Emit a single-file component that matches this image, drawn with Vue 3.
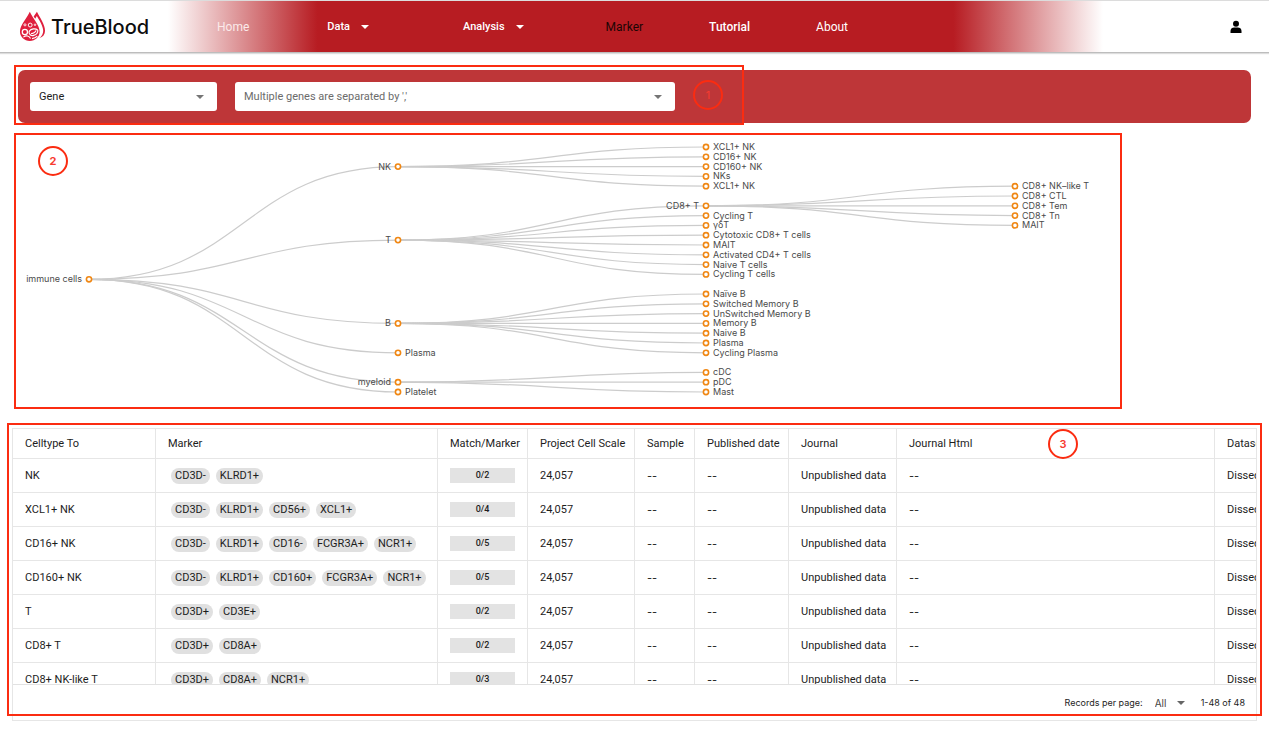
<script setup>
import { ref } from 'vue'

const searchType = ref('Gene')
const genes = ref('')
const pageSize = ref('All')

const ROW = 9.8
const COLS = [73, 382, 690, 999]
const TOP = 12

// [id, parent, depth, row, label]
const nodeData = [
  ['root', null, 0, 13.5, 'immune cells'],
  ['nk', 'root', 1, 2, 'NK'],
  ['t', 'root', 1, 9.5, 'T'],
  ['b', 'root', 1, 18, 'B'],
  ['plasma', 'root', 1, 21, 'Plasma'],
  ['myeloid', 'root', 1, 24, 'myeloid'],
  ['platelet', 'root', 1, 25, 'Platelet'],
  ['nk1', 'nk', 2, 0, 'XCL1+ NK'],
  ['nk2', 'nk', 2, 1, 'CD16+ NK'],
  ['nk3', 'nk', 2, 2, 'CD160+ NK'],
  ['nk4', 'nk', 2, 3, 'NKs'],
  ['nk5', 'nk', 2, 4, 'XCL1+ NK'],
  ['cd8', 't', 2, 6, 'CD8+ T'],
  ['t1', 't', 2, 7, 'Cycling T'],
  ['t2', 't', 2, 8, 'γδT'],
  ['t3', 't', 2, 9, 'Cytotoxic CD8+ T cells'],
  ['t4', 't', 2, 10, 'MAIT'],
  ['t5', 't', 2, 11, 'Activated CD4+ T cells'],
  ['t6', 't', 2, 12, 'Naive T cells'],
  ['t7', 't', 2, 13, 'Cycling T cells'],
  ['b1', 'b', 2, 15, 'Naïve B'],
  ['b2', 'b', 2, 16, 'Switched Memory B'],
  ['b3', 'b', 2, 17, 'UnSwitched Memory B'],
  ['b4', 'b', 2, 18, 'Memory B'],
  ['b5', 'b', 2, 19, 'Naive B'],
  ['b6', 'b', 2, 20, 'Plasma'],
  ['b7', 'b', 2, 21, 'Cycling Plasma'],
  ['m1', 'myeloid', 2, 23, 'cDC'],
  ['m2', 'myeloid', 2, 24, 'pDC'],
  ['m3', 'myeloid', 2, 25, 'Mast'],
  ['c1', 'cd8', 3, 4, 'CD8+ NK–like T'],
  ['c2', 'cd8', 3, 5, 'CD8+ CTL'],
  ['c3', 'cd8', 3, 6, 'CD8+ Tem'],
  ['c4', 'cd8', 3, 7, 'CD8+ Tn'],
  ['c5', 'cd8', 3, 8, 'MAIT'],
]
const nodes = nodeData.map(([id, parent, depth, row, label]) => ({
  id, parent, label,
  x: COLS[depth],
  y: TOP + row * ROW,
  branch: nodeData.some((n) => n[1] === id),
}))
const links = nodes.filter((n) => n.parent).map((n) => {
  const p = nodes.find((m) => m.id === n.parent)
  const mid = (p.x + n.x) / 2
  return { id: n.id, d: `M${p.x} ${p.y}C${mid} ${p.y} ${mid} ${n.y} ${n.x} ${n.y}` }
})

const columns = [
  { name: 'Celltype To', cls: 'c-type' },
  { name: 'Marker', cls: 'c-marker' },
  { name: 'Match/Marker', cls: 'c-match' },
  { name: 'Project Cell Scale', cls: 'c-scale' },
  { name: 'Sample', cls: 'c-sample' },
  { name: 'Published date', cls: 'c-date' },
  { name: 'Journal', cls: 'c-journal' },
  { name: 'Journal Html', cls: 'c-html' },
  { name: 'Dataset', cls: 'c-dataset' },
]
const rows = [
  { type: 'NK', markers: ['CD3D-', 'KLRD1+'] },
  { type: 'XCL1+ NK', markers: ['CD3D-', 'KLRD1+', 'CD56+', 'XCL1+'] },
  { type: 'CD16+ NK', markers: ['CD3D-', 'KLRD1+', 'CD16-', 'FCGR3A+', 'NCR1+'] },
  { type: 'CD160+ NK', markers: ['CD3D-', 'KLRD1+', 'CD160+', 'FCGR3A+', 'NCR1+'] },
  { type: 'T', markers: ['CD3D+', 'CD3E+'] },
  { type: 'CD8+ T', markers: ['CD3D+', 'CD8A+'] },
  { type: 'CD8+ NK-like T', markers: ['CD3D+', 'CD8A+', 'NCR1+'] },
]
</script>

<template>
  <div class="page">
    <header class="topbar">
      <a class="brand" href="#">
        <svg class="brand-icon" viewBox="0 0 28 32" aria-hidden="true">
          <path d="M11.200 0.800C8.500 7 1 14.500 1 21.300 1 27 5.500 31 11.200 31s10.200-4 10.200-9.700C21.400 14.500 13.900 7 11.200 0.800z" fill="#df1f3d" />
          <path d="M15.200 5.500 18.600 0.800C21.500 6.500 27 14 27 20.500c0 4-2.200 6.500-5.800 7.500 2.600-2 3.900-4.500 3.900-7.500 0-5-4-11-6.600-15.500L16.800 8z" fill="#df1f3d" />
          <g fill="none" stroke="#fff">
            <circle cx="6.200" cy="14.300" r="1.100" stroke-width="0.900" />
            <circle cx="11.600" cy="14.500" r="2" stroke-width="1" />
            <circle cx="16.600" cy="14.200" r="0.800" stroke-width="0.900" />
            <circle cx="6.100" cy="21.600" r="2.700" stroke-width="1.300" />
            <path d="M10.500 21c2-2.800 6.500-3.500 9-1.200M10.500 21c-.8 3 2 5 4.700 4.200 2.800-.8 4.500-3 4.300-5.400M12.500 23.200c1.600.3 4.800-1.300 5.200-3.200M4.500 27c3-2 6-1.500 7.500 1.500M13.500 28.500c2-.2 4-1 5.500-2.500" stroke-width="1.200" />
          </g>
        </svg>
        <span class="brand-name">TrueBlood</span>
      </a>
      <nav class="nav">
        <a class="nav-link soft" href="#">Home</a>
        <button class="nav-menu" type="button">Data <span class="caret"></span></button>
        <button class="nav-menu" type="button">Analysis <span class="caret"></span></button>
        <a class="nav-link active" href="#">Marker</a>
        <a class="nav-link strong" href="#">Tutorial</a>
        <a class="nav-link" href="#">About</a>
      </nav>
      <button class="account" type="button" aria-label="Account">
        <svg viewBox="0 0 12 14" aria-hidden="true">
          <circle cx="6" cy="3.800" r="3" />
          <path d="M0.500 12.900V11c0-2.300 1.800-3.400 3.600-3.400h3.800c1.800 0 3.600 1.100 3.600 3.400v1.900z" />
        </svg>
      </button>
    </header>

    <main>
      <form class="search" @submit.prevent>
        <div class="field type-field">
          <select v-model="searchType" aria-label="Search type">
            <option>Gene</option>
            <option>Cell type</option>
          </select>
          <span class="caret"></span>
        </div>
        <div class="field gene-field">
          <input v-model="genes" type="text" aria-label="Genes" placeholder="Multiple genes are separated by ','">
          <span class="caret"></span>
        </div>
        <span class="badge badge-search">1</span>
        <div class="search-frame"></div>
      </form>

      <section class="tree">
        <svg viewBox="0 0 1104 272" role="img" aria-label="Immune cell hierarchy">
          <path v-for="l in links" :key="l.id" class="link" :d="l.d" />
          <g v-for="n in nodes" :key="n.id">
            <circle class="node" :cx="n.x" :cy="n.y" r="2.600" />
            <text
              class="label"
              :x="n.branch ? n.x - 7 : n.x + 7"
              :y="n.y + 3"
              :text-anchor="n.branch ? 'end' : 'start'"
            >{{ n.label }}</text>
          </g>
        </svg>
        <span class="badge badge-tree">2</span>
      </section>

      <section class="results">
        <div class="scroller">
          <table>
            <colgroup>
              <col v-for="c in columns" :key="c.name" :class="c.cls">
            </colgroup>
            <thead>
              <tr><th v-for="c in columns" :key="c.name" scope="col">{{ c.name }}</th></tr>
            </thead>
            <tbody>
              <tr v-for="r in rows" :key="r.type">
                <td>{{ r.type }}</td>
                <td>
                  <div class="chips">
                    <span v-for="m in r.markers" :key="m" class="chip">{{ m }}</span>
                  </div>
                </td>
                <td><div class="match">0/{{ r.markers.length }}</div></td>
                <td>24,057</td>
                <td class="empty">--</td>
                <td class="empty">--</td>
                <td>Unpublished data</td>
                <td class="empty">--</td>
                <td>Dissection</td>
              </tr>
            </tbody>
          </table>
        </div>
        <footer class="pager">
          <label for="page-size">Records per page:</label>
          <div class="page-size">
            <select id="page-size" v-model="pageSize">
              <option>All</option>
              <option>20</option>
            </select>
            <span class="caret"></span>
          </div>
          <span>1-48 of 48</span>
        </footer>
        <span class="badge badge-results">3</span>
        <div class="results-frame"></div>
      </section>
    </main>
  </div>
</template>

<style>
body {
  margin: 0;
  background: #fff;
}
</style>

<style scoped>
.page {
  font-family: Roboto, "Liberation Sans", sans-serif;
  font-size: 11px;
  line-height: 16px;
  color: #1d1d1d;
}
.page * {
  box-sizing: border-box;
}
button,
select,
input {
  font: inherit;
  color: inherit;
  border: 0;
  padding: 0;
  background: none;
  appearance: none;
}
a {
  text-decoration: none;
}
.caret {
  flex: none;
  border: 4px solid transparent;
  border-top-color: currentColor;
  border-bottom: 0;
}

.topbar {
  display: flex;
  height: 53px;
  border-top: 1px solid #dcdcdc;
  border-bottom: 1px solid #bdbdbd;
  box-shadow: 0 1px 1px #ddd;
}
.brand {
  flex: none;
  display: flex;
  align-items: center;
  gap: 5px;
  width: 168px;
  padding-left: 19px;
  color: #0d0d0d;
}
.brand-icon {
  width: 27px;
  height: 31px;
}
.brand-name {
  font-family: Inter, "Liberation Sans", sans-serif;
  font-size: 20px;
  font-weight: 500;
  line-height: 24px;
}
.nav {
  flex: 1;
  display: flex;
  align-items: center;
  padding-left: 16px;
  color: #fff;
  background: linear-gradient(90deg, #fff, #b71c22 16%, #b71c22 84%, #fff);
}
.nav-link {
  padding: 0 33px;
  font-size: 12px;
  color: #fff;
}
.nav-link.soft {
  color: #fbeaea;
}
.nav-link.active {
  color: #1c0505;
}
.nav-link.strong {
  font-weight: 500;
}
.nav-menu {
  display: flex;
  align-items: center;
  gap: 11px;
  padding: 0 49px 0 45px;
  font-weight: 500;
}
.account {
  flex: none;
  display: flex;
  align-items: center;
  justify-content: flex-end;
  width: 166px;
  padding-right: 27px;
}
.account svg {
  width: 12px;
  height: 14px;
}

.search {
  position: relative;
  display: flex;
  gap: 18px;
  margin: 17px 18px 0;
  padding: 12px;
  border-radius: 7px;
  background: #be3638;
}
.field {
  display: flex;
  align-items: center;
  height: 29px;
  padding: 0 13px 0 9px;
  border-radius: 3px;
  background: #fff;
  color: #757575;
}
.field select,
.field input {
  flex: 1;
  min-width: 0;
  height: 100%;
  outline: 0;
}
.field select {
  color: #1d1d1d;
}
.field input::placeholder {
  color: #6b6b6b;
  opacity: 1;
}
.type-field {
  width: 187px;
}
.gene-field {
  width: 440px;
}
.search-frame {
  position: absolute;
  top: -5px;
  bottom: -2px;
  left: -4px;
  width: 730px;
  border: 2px solid #fb2c11;
  pointer-events: none;
}
.badge {
  position: absolute;
  display: flex;
  align-items: center;
  justify-content: center;
  width: 30px;
  height: 30px;
  border: 2px solid #fb2c11;
  border-radius: 50%;
  font-family: Inter, "Liberation Sans", sans-serif;
  font-weight: 700;
  color: #f73b30;
}
.badge-search {
  top: 10px;
  left: 675px;
  font-weight: 400;
}
.badge-tree {
  top: 11px;
  left: 22px;
}
.badge-results {
  top: 0;
  left: 1035px;
  font-weight: 600;
}

.tree {
  position: relative;
  margin: 10px 147px 0 14px;
  border: 2px solid #fb2c11;
}
.tree svg {
  display: block;
  width: 100%;
}
.link {
  fill: none;
  stroke: #ccc;
  stroke-width: 1.200;
}
.node {
  fill: #fff;
  stroke: #f08713;
  stroke-width: 1.600;
}
.label {
  font-family: Inter, "Liberation Sans", sans-serif;
  font-size: 9px;
  fill: #4a4a4a;
}

.results {
  position: relative;
  margin: 19px 12px 0;
  border: 1px solid #e6e6e6;
}
.results-frame {
  position: absolute;
  inset: -6px -6px 4px;
  border: 2px solid #fb2c11;
  pointer-events: none;
}
.scroller {
  height: 256px;
  overflow: auto;
  scrollbar-width: none;
  border-bottom: 1px solid #e2e2e2;
}
table {
  width: 1400px;
  table-layout: fixed;
  border-spacing: 0;
}
th,
td {
  padding: 0 12px;
  border-right: 1px solid #e6e6e6;
  border-bottom: 1px solid #e6e6e6;
  text-align: left;
  font-weight: 400;
  white-space: nowrap;
}
th {
  height: 30px;
}
td {
  height: 34px;
}
.empty {
  font-family: Inter, "Liberation Sans", sans-serif;
}
.c-type { width: 143px; }
.c-marker { width: 282px; }
.c-match { width: 90px; }
.c-scale { width: 107px; }
.c-sample { width: 60px; }
.c-date { width: 94px; }
.c-journal { width: 108px; }
.c-html { width: 318px; }
.chips {
  display: flex;
  gap: 6px;
  padding-left: 3px;
}
.chip {
  padding: 0 4px;
  border-radius: 8px;
  background: #e0e0e0;
}
.match {
  height: 15px;
  line-height: 15px;
  font-size: 9px;
  font-weight: 500;
  text-align: center;
  background: #e3e3e3;
}
.pager {
  display: flex;
  align-items: center;
  justify-content: flex-end;
  gap: 12px;
  height: 35px;
  padding-right: 11px;
  font-family: Inter, "Liberation Sans", sans-serif;
  font-size: 9px;
}
.page-size {
  display: flex;
  align-items: center;
  gap: 9px;
  margin-right: 4px;
  font-size: 10px;
  color: #666;
}
.page-size select {
  color: #444;
}
</style>
